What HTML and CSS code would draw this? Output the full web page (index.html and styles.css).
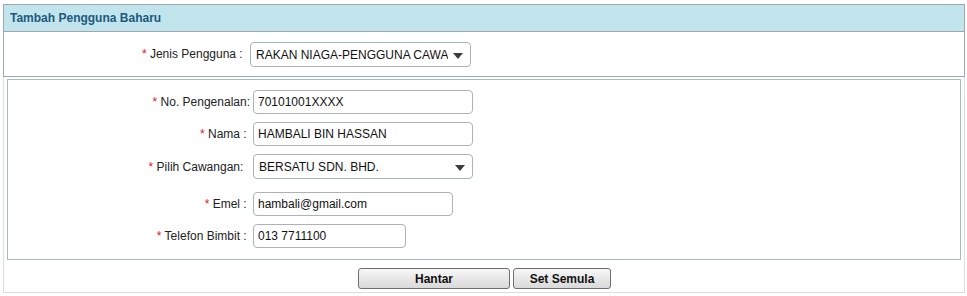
FILE: index.html
```html
<!DOCTYPE html>
<html>
<head>
<meta charset="utf-8">
<link rel="stylesheet" href="styles.css">
</head>
<body>
<div class="wrap">
  <div class="top-panel">
    <div class="panel-head">Tambah Pengguna Baharu</div>
    <div class="top-row">
      <div class="label top-label"><span class="req">*</span> Jenis Pengguna :&nbsp;</div>
      <div class="select sel-top">
        <span class="sel-text">RAKAN NIAGA-PENGGUNA CAWANGAN</span>
        <span class="arrow"></span>
      </div>
    </div>
  </div>
  <div class="lower-panel">
    <div class="form-box">
      <div class="row">
        <div class="label"><span class="req">*</span> No. Pengenalan:</div>
        <div class="field w220">70101001XXXX</div>
      </div>
      <div class="row">
        <div class="label"><span class="req">*</span> Nama :&nbsp;</div>
        <div class="field w220">HAMBALI BIN HASSAN</div>
      </div>
      <div class="row row-select">
        <div class="label"><span class="req">*</span> Pilih Cawangan:&nbsp;&nbsp;</div>
        <div class="select w220">
          <span class="sel-text">BERSATU SDN. BHD.</span>
          <span class="arrow"></span>
        </div>
      </div>
      <div class="row">
        <div class="label"><span class="req">*</span> Emel :&nbsp;</div>
        <div class="field w200">hambali@gmail.com</div>
      </div>
      <div class="row">
        <div class="label"><span class="req">*</span> Telefon Bimbit :&nbsp;</div>
        <div class="field w153">013 7711100</div>
      </div>
    </div>
    <div class="actions">
      <button class="btn btn-main">Hantar</button>
      <button class="btn btn-reset">Set Semula</button>
    </div>
  </div>
</div>
</body>
</html>
```

FILE: styles.css
```css
* { box-sizing: border-box; }
body {
  margin: 0;
  background: #ffffff;
  font-family: "Liberation Sans", Arial, sans-serif;
  font-size: 12px;
  color: #222222;
}
.wrap {
  margin: 4px 0 0 3px;
  width: 962px;
}
.top-panel {
  border: 1px solid #9ba8b0;
}
.panel-head {
  height: 27px;
  line-height: 26px;
  background: #c1e4ed;
  border-bottom: 1px solid #9ba8b0;
  padding-left: 6px;
  font-weight: bold;
  color: #1d5a7e;
}
.top-row {
  height: 44px;
  padding-top: 10px;
  display: flex;
  align-items: flex-start;
}
.label {
  width: 242px;
  height: 24px;
  line-height: 24px;
  text-align: right;
  margin-right: 3px;
  white-space: nowrap;
  color: #222222;
}
.top-label {
  width: 242px;
  height: 25px;
  line-height: 25px;
  margin-right: 4px;
}
.req { color: #e0141e; }
.select {
  position: relative;
  height: 25px;
  border: 1px solid #a8b3bb;
  border-radius: 4px;
  background: #ffffff;
  display: flex;
  align-items: center;
  padding-left: 5px;
}
.sel-top { width: 221px; }
.sel-text {
  display: block;
  width: 192px;
  overflow: hidden;
  white-space: nowrap;
  color: #111111;
}
.arrow {
  position: absolute;
  right: 7px;
  top: 10px;
  width: 0;
  height: 0;
  border-left: 5px solid transparent;
  border-right: 5px solid transparent;
  border-top: 6px solid #3c3c3c;
}
.lower-panel {
  border: 1px solid #dcdcdc;
  border-top: none;
  padding: 2px 3px 3px 3px;
}
.form-box {
  border: 1px solid #a3bcc0;
  padding: 10px 0 11px 0;
}
.row {
  display: flex;
  align-items: center;
  margin-bottom: 8px;
}
.row:last-child { margin-bottom: 0; }
.row-select { margin-bottom: 13px; }
.field {
  height: 24px;
  line-height: 22px;
  border: 1px solid #aab3b9;
  border-radius: 4px;
  padding: 0 4px;
  color: #111111;
  white-space: nowrap;
  background: #ffffff;
}
.w220 { width: 220px; }
.w200 { width: 200px; }
.w153 { width: 153px; }
.actions {
  display: flex;
  justify-content: center;
  gap: 3px;
  margin-top: 8px;
  padding-left: 1px;
}
.btn {
  height: 21px;
  border: 1px solid #6e6e6e;
  border-radius: 3px;
  background: linear-gradient(#f7f7f7, #d9d9d9);
  font-family: "Liberation Sans", Arial, sans-serif;
  font-size: 12px;
  font-weight: bold;
  color: #111111;
  padding: 0;
}
.btn-main { width: 152px; }
.btn-reset { width: 98px; }
```
